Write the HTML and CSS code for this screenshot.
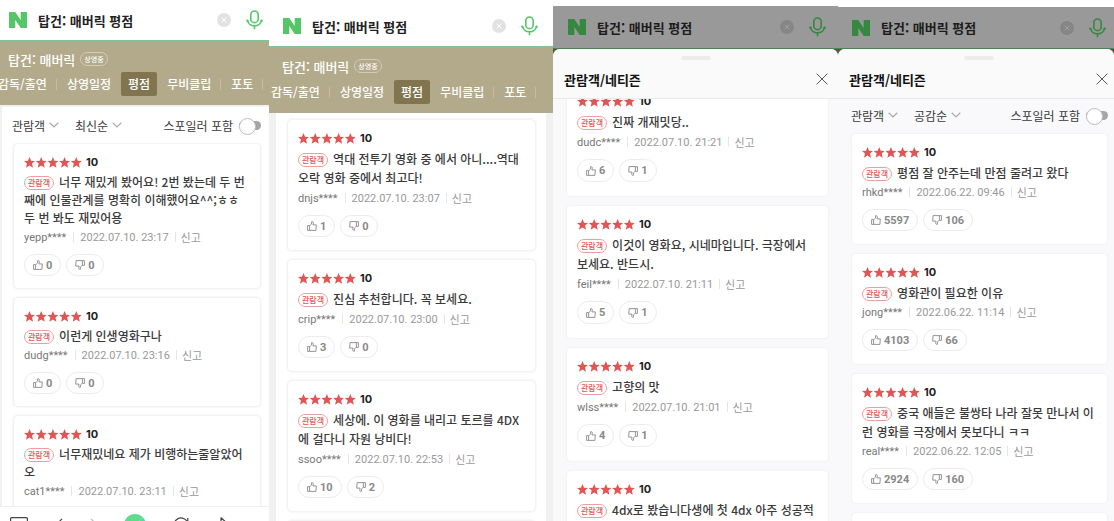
FILE: index.html
```html
<!DOCTYPE html>
<html lang="ko">
<head>
  <meta charset="UTF-8">
  <meta name="viewport" content="width=device-width, initial-scale=1.0">
  <title>탑건: 매버릭 평점</title>
  <link rel="stylesheet" href="styles.css">
</head>
<body>

  <!-- shared icons -->
  <svg class="sprite" aria-hidden="true">
    <symbol id="star" viewBox="0 0 10 10"><path d="M5 0l1.4 3.300 3.600.3-2.700 2.400.9 3.700L5 7.700 1.800 9.700l.9-3.700L0 3.600l3.600-.3z"/></symbol>
    <symbol id="stars" viewBox="0 0 58 11">
      <use href="#star" x="0" width="11" height="11"/>
      <use href="#star" x="11.7" width="11" height="11"/>
      <use href="#star" x="23.4" width="11" height="11"/>
      <use href="#star" x="35.1" width="11" height="11"/>
      <use href="#star" x="46.8" width="11" height="11"/>
    </symbol>
    <symbol id="up" viewBox="0 0 10 10"><path d="M.6 4.6h2v4.8h-2zM2.6 4.8L4.6 3V.7c1.3-.3 1.9.6 1.7 1.6l-.4 1.6h3.4l-.4 5.5H2.6" fill="none" stroke="currentColor" stroke-width=".9" stroke-linejoin="round"/></symbol>
    <symbol id="down" viewBox="0 0 10 10"><path d="M9.400 5.400h-2V.6h2zM7.400 5.200L5.400 7v2.300c-1.300.3-1.900-.6-1.700-1.600l.4-1.600H.7L1.100.6h6.300" fill="none" stroke="currentColor" stroke-width=".9" stroke-linejoin="round"/></symbol>
    <symbol id="logo" viewBox="0 0 18 16"><path d="M0 0h6.300l5.400 8V0H18v16h-6.300L6.300 8v8H0z"/></symbol>
    <symbol id="mic" viewBox="0 0 17 20"><rect x="4.800" y="1" width="7.400" height="11.600" rx="3.700" fill="none" stroke="currentColor" stroke-width="1.600"/><path d="M1.600 10.600c.7 3.200 3.400 5.200 6.900 5.200s6.200-2 6.900-5.200M8.500 15.800v3.400" fill="none" stroke="currentColor" stroke-width="1.600"/><circle cx="1.300" cy="10.600" r="1.200" fill="currentColor"/><circle cx="15.700" cy="10.600" r="1.200" fill="currentColor"/></symbol>
    <symbol id="clear" viewBox="0 0 14 14"><circle cx="7" cy="7" r="7" fill="currentColor"/><path d="M4.700 4.700l4.600 4.600M9.300 4.700L4.700 9.300" stroke="var(--cross, #fff)" stroke-width="1"/></symbol>
    <symbol id="chevron" viewBox="0 0 10 6"><path d="M.7.8L5 5 9.300.8" fill="none" stroke="#aaa" stroke-width="1.200"/></symbol>
    <symbol id="close" viewBox="0 0 12 12"><path d="M.6.6l10.800 10.800M11.400.6L.6 11.400" stroke="#555" stroke-width="1"/></symbol>
  </svg>

  <main class="screens">

    <section class="screen screen-latest">
      <header class="search">
        <svg class="logo"><use href="#logo"/></svg>
        <input type="text" aria-label="검색어" value="탑건: 매버릭 평점">
        <button class="icon-btn" aria-label="지우기"><svg class="clear"><use href="#clear"/></svg></button>
        <button class="icon-btn" aria-label="음성검색"><svg class="mic"><use href="#mic"/></svg></button>
      </header>
      <div class="hero">
        <h1>탑건: 매버릭 <span class="status">상영중</span></h1>
        <nav class="tabs">
          <a href="#">감독/출연</a><a href="#">상영일정</a><a href="#" class="active">평점</a><a href="#">무비클립</a><a href="#">포토</a>
        </nav>
      </div>
      <div class="filters">
        <label class="select"><select aria-label="작성자"><option>관람객</option></select><svg><use href="#chevron"/></svg></label>
        <label class="select"><select aria-label="정렬"><option>최신순</option></select><svg><use href="#chevron"/></svg></label>
        <label class="spoiler">스포일러 포함 <input type="checkbox"></label>
      </div>
      <div class="list">
        <article class="card">
          <div class="score"><svg><use href="#stars"/></svg>10</div>
          <p><span class="badge">관람객</span>너무 재밌게 봤어요! 2번 봤는데 두 번<br>째에 인물관계를 명확히 이해했어요^^;ㅎㅎ<br>두 번 봐도 재밌어용</p>
          <div class="meta"><span>yepp****</span><time>2022.07.10. 23:17</time><a href="#">신고</a></div>
          <div class="votes"><button><svg><use href="#up"/></svg>0</button><button><svg><use href="#down"/></svg>0</button></div>
        </article>
        <article class="card">
          <div class="score"><svg><use href="#stars"/></svg>10</div>
          <p><span class="badge">관람객</span>이런게 인생영화구나</p>
          <div class="meta"><span>dudg****</span><time>2022.07.10. 23:16</time><a href="#">신고</a></div>
          <div class="votes"><button><svg><use href="#up"/></svg>0</button><button><svg><use href="#down"/></svg>0</button></div>
        </article>
        <article class="card">
          <div class="score"><svg><use href="#stars"/></svg>10</div>
          <p><span class="badge">관람객</span>너무재밌네요 제가 비행하는줄알았어<br>오</p>
          <div class="meta"><span>cat1****</span><time>2022.07.10. 23:11</time><a href="#">신고</a></div>
        </article>
      </div>
      <footer class="toolbar">
        <button class="icon-btn" aria-label="홈"><svg width="18" height="16" viewBox="0 0 18 16"><rect x=".6" y=".6" width="16.800" height="14.800" rx="1" fill="none" stroke="#444" stroke-width="1.200"/><path d="M5.500 4v2M12.500 4v2M5 9c2 3 6 3 8 0" fill="none" stroke="#444" stroke-width="1.200"/></svg></button>
        <button class="icon-btn" aria-label="뒤로"><svg width="8" height="14" viewBox="0 0 8 14"><path d="M7 .8L1 7l6 6.200" fill="none" stroke="#444" stroke-width="1.200"/></svg></button>
        <button class="icon-btn" aria-label="앞으로"><svg width="8" height="14" viewBox="0 0 8 14"><path d="M1 .8L7 7l-6 6.200" fill="none" stroke="#bbb" stroke-width="1.200"/></svg></button>
        <button class="icon-btn" aria-label="그린닷"><span class="dot"></span></button>
        <button class="icon-btn" aria-label="새로고침"><svg width="16" height="16" viewBox="0 0 16 16"><path d="M14.400 5A7 7 0 1 0 15 9M14.800 1v4.300h-4.300" fill="none" stroke="#444" stroke-width="1.200"/></svg></button>
        <button class="icon-btn" aria-label="공유"><svg width="14" height="16" viewBox="0 0 14 16"><path d="M5 .8l8 7-8 6.500V10C3 10 1.500 11 .8 13 1 8.500 2.500 5.500 5 5z" fill="none" stroke="#444" stroke-width="1.200" stroke-linejoin="round"/></svg></button>
        <span class="more"></span>
      </footer>
    </section>

    <section class="screen screen-scrolled">
      <header class="search">
        <svg class="logo"><use href="#logo"/></svg>
        <input type="text" aria-label="검색어" value="탑건: 매버릭 평점">
        <button class="icon-btn" aria-label="지우기"><svg class="clear"><use href="#clear"/></svg></button>
        <button class="icon-btn" aria-label="음성검색"><svg class="mic"><use href="#mic"/></svg></button>
      </header>
      <div class="hero">
        <h1>탑건: 매버릭 <span class="status">상영중</span></h1>
        <nav class="tabs">
          <a href="#">감독/출연</a><a href="#">상영일정</a><a href="#" class="active">평점</a><a href="#">무비클립</a><a href="#">포토</a>
        </nav>
      </div>
      <div class="list">
        <article class="card">
          <div class="score"><svg><use href="#stars"/></svg>10</div>
          <p><span class="badge">관람객</span>역대 전투기 영화 중 에서 아니....역대<br>오락 영화 중에서 최고다!</p>
          <div class="meta"><span>dnjs****</span><time>2022.07.10. 23:07</time><a href="#">신고</a></div>
          <div class="votes"><button><svg><use href="#up"/></svg>1</button><button><svg><use href="#down"/></svg>0</button></div>
        </article>
        <article class="card">
          <div class="score"><svg><use href="#stars"/></svg>10</div>
          <p><span class="badge">관람객</span>진심 추천합니다. 꼭 보세요.</p>
          <div class="meta"><span>crip****</span><time>2022.07.10. 23:00</time><a href="#">신고</a></div>
          <div class="votes"><button><svg><use href="#up"/></svg>3</button><button><svg><use href="#down"/></svg>0</button></div>
        </article>
        <article class="card">
          <div class="score"><svg><use href="#stars"/></svg>10</div>
          <p><span class="badge">관람객</span>세상에. 이 영화를 내리고 토르를 4DX<br>에 걸다니 자원 낭비다!</p>
          <div class="meta"><span>ssoo****</span><time>2022.07.10. 22:53</time><a href="#">신고</a></div>
          <div class="votes"><button><svg><use href="#up"/></svg>10</button><button><svg><use href="#down"/></svg>2</button></div>
        </article>
        <article class="card"></article>
      </div>
    </section>

    <section class="screen screen-sheet">
      <header class="search dimmed">
        <svg class="logo"><use href="#logo"/></svg>
        <input type="text" aria-label="검색어" value="탑건: 매버릭 평점">
        <button class="icon-btn" aria-label="지우기"><svg class="clear"><use href="#clear"/></svg></button>
        <button class="icon-btn" aria-label="음성검색"><svg class="mic"><use href="#mic"/></svg></button>
      </header>
      <div class="backdrop">
        <div class="sheet">
          <div class="sheet-head">
            <span class="handle"></span>
            <div class="sheet-title">
              <h2>관람객/네티즌</h2>
              <button class="icon-btn" aria-label="닫기"><svg class="close"><use href="#close"/></svg></button>
            </div>
          </div>
          <div class="sheet-body">
            <div class="list scrolled">
              <article class="card">
                <div class="score"><svg><use href="#stars"/></svg>10</div>
                <p><span class="badge">관람객</span>진짜 개재밋당..</p>
                <div class="meta"><span>dudc****</span><time>2022.07.10. 21:21</time><a href="#">신고</a></div>
                <div class="votes"><button><svg><use href="#up"/></svg>6</button><button><svg><use href="#down"/></svg>1</button></div>
              </article>
              <article class="card">
                <div class="score"><svg><use href="#stars"/></svg>10</div>
                <p><span class="badge">관람객</span>이것이 영화요, 시네마입니다. 극장에서<br>보세요. 반드시.</p>
                <div class="meta"><span>feil****</span><time>2022.07.10. 21:11</time><a href="#">신고</a></div>
                <div class="votes"><button><svg><use href="#up"/></svg>5</button><button><svg><use href="#down"/></svg>1</button></div>
              </article>
              <article class="card">
                <div class="score"><svg><use href="#stars"/></svg>10</div>
                <p><span class="badge">관람객</span>고향의 맛</p>
                <div class="meta"><span>wlss****</span><time>2022.07.10. 21:01</time><a href="#">신고</a></div>
                <div class="votes"><button><svg><use href="#up"/></svg>4</button><button><svg><use href="#down"/></svg>1</button></div>
              </article>
              <article class="card">
                <div class="score"><svg><use href="#stars"/></svg>10</div>
                <p><span class="badge">관람객</span>4dx로 봤습니다생에 첫 4dx 아주 성공적</p>
              </article>
            </div>
          </div>
        </div>
      </div>
    </section>

    <section class="screen screen-sheet screen-best">
      <header class="search dimmed">
        <svg class="logo"><use href="#logo"/></svg>
        <input type="text" aria-label="검색어" value="탑건: 매버릭 평점">
        <button class="icon-btn" aria-label="지우기"><svg class="clear"><use href="#clear"/></svg></button>
        <button class="icon-btn" aria-label="음성검색"><svg class="mic"><use href="#mic"/></svg></button>
      </header>
      <div class="backdrop">
        <div class="sheet">
          <div class="sheet-head">
            <span class="handle"></span>
            <div class="sheet-title">
              <h2>관람객/네티즌</h2>
              <button class="icon-btn" aria-label="닫기"><svg class="close"><use href="#close"/></svg></button>
            </div>
          </div>
          <div class="sheet-body">
            <div class="filters">
              <label class="select"><select aria-label="작성자"><option>관람객</option></select><svg><use href="#chevron"/></svg></label>
              <label class="select"><select aria-label="정렬"><option>공감순</option></select><svg><use href="#chevron"/></svg></label>
              <label class="spoiler">스포일러 포함 <input type="checkbox"></label>
            </div>
            <div class="list">
              <article class="card">
                <div class="score"><svg><use href="#stars"/></svg>10</div>
                <p><span class="badge">관람객</span>평점 잘 안주는데 만점 줄려고 왔다</p>
                <div class="meta"><span>rhkd****</span><time>2022.06.22. 09:46</time><a href="#">신고</a></div>
                <div class="votes"><button><svg><use href="#up"/></svg>5597</button><button><svg><use href="#down"/></svg>106</button></div>
              </article>
              <article class="card">
                <div class="score"><svg><use href="#stars"/></svg>10</div>
                <p><span class="badge">관람객</span>영화관이 필요한 이유</p>
                <div class="meta"><span>jong****</span><time>2022.06.22. 11:14</time><a href="#">신고</a></div>
                <div class="votes"><button><svg><use href="#up"/></svg>4103</button><button><svg><use href="#down"/></svg>66</button></div>
              </article>
              <article class="card">
                <div class="score"><svg><use href="#stars"/></svg>10</div>
                <p><span class="badge">관람객</span>중국 애들은 불쌍타 나라 잘못 만나서 이<br>런 영화를 극장에서 못보다니 ㅋㅋ</p>
                <div class="meta"><span>real****</span><time>2022.06.22. 12:05</time><a href="#">신고</a></div>
                <div class="votes"><button><svg><use href="#up"/></svg>2924</button><button><svg><use href="#down"/></svg>160</button></div>
              </article>
              <article class="card"></article>
            </div>
          </div>
        </div>
      </div>
    </section>

  </main>
</body>
</html>
```
FILE: styles.css
```css
* {
  box-sizing: border-box;
}
body {
  margin: 0;
  background: #fff;
  color: #3a3a3a;
  font-family: Roboto, "Noto Sans CJK KR", sans-serif;
  font-size: 12px;
}
h1, h2, p {
  margin: 0;
}
a {
  color: inherit;
  text-decoration: none;
}
button, input, select {
  font: inherit;
  color: inherit;
}
svg {
  display: block;
  flex: none;
}
.sprite {
  position: absolute;
  width: 0;
  height: 0;
}
.icon-btn {
  display: flex;
  padding: 0;
  border: 0;
  background: none;
}

.screens {
  display: grid;
  grid-template-columns: 269fr 284fr 285fr 276fr;
  height: 100vh;
  overflow: hidden;
}
.screen {
  --line: 19px;
  --meta-gap: 2px;
  --vote: 22px;
  --bottom: 13px;
  display: flex;
  flex-direction: column;
  min-width: 0;
  min-height: 0;
  overflow: hidden;
}

/* search bar */
.search {
  flex: none;
  display: flex;
  align-items: center;
  height: 42px;
  padding: 0 15px 0 14px;
  border-bottom: 2px solid #7cc492;
  background: #fff;
}
.search input {
  flex: 1;
  min-width: 0;
  margin-left: 11px;
  padding: 0;
  border: 0;
  background: none;
  color: #222;
  font-family: "Noto Sans CJK KR", sans-serif;
  font-size: 13px;
  font-weight: 700;
}
.logo {
  width: 18px;
  height: 16px;
  fill: #55c667;
}
.clear {
  width: 14px;
  height: 14px;
  margin-right: 15px;
  color: #e2e2e2;
}
.mic {
  width: 17px;
  height: 20px;
  color: #55c667;
}
.dimmed {
  border-bottom: 1px solid #4b8058;
  background: #999;
}
.dimmed .logo {
  fill: #36873f;
}
.dimmed .mic {
  color: #36873f;
}
.dimmed .clear {
  --cross: #a0a0a0;
  color: #868686;
}
.dimmed input {
  color: #1c1c1c;
}

/* movie title and tabs */
.hero {
  flex: none;
  padding: 8px 0 9px;
  overflow: hidden;
  background: #b3aa8c;
  color: #fff;
}
.hero h1 {
  display: flex;
  align-items: center;
  gap: 5px;
  height: 18px;
  margin-bottom: 4px;
  padding-left: 8px;
  font-family: "Noto Sans CJK KR", sans-serif;
  font-size: 13px;
  font-weight: 500;
}
.status {
  height: 14px;
  padding: 0 3px;
  border: 1px solid #d2ccb9;
  border-radius: 7px;
  font-size: 7px;
  line-height: 12px;
}
.tabs {
  display: flex;
  align-items: center;
  margin-left: -12px;
  white-space: nowrap;
  font-family: "Noto Sans CJK KR", sans-serif;
  font-weight: 500;
  line-height: 24px;
}
.tabs a {
  flex: none;
  padding: 0 10px;
}
.tabs a:first-child,
.tabs a:nth-child(4),
.tabs a:nth-child(5) {
  background: linear-gradient(#c4bda5, #c4bda5) right center / 1px 11px no-repeat;
}
.tabs .active {
  padding: 0 7px;
  border-radius: 2px;
  background: #80754f;
}

/* filters */
.filters {
  flex: none;
  display: flex;
  align-items: center;
  height: 38px;
  padding: 0 8px 0 12px;
  font-family: "Noto Sans CJK KR", sans-serif;
}
.select {
  display: flex;
  align-items: center;
  gap: 3px;
  margin-right: 16px;
}
.select select {
  appearance: none;
  padding: 0;
  border: 0;
  background: none;
}
.select svg {
  width: 10px;
  height: 6px;
}
.spoiler {
  display: flex;
  align-items: center;
  gap: 6px;
  margin-left: auto;
}
.spoiler input {
  appearance: none;
  position: relative;
  width: 22px;
  height: 9px;
  margin: 0;
  border-radius: 5px;
  background: #a5a5a8;
}
.spoiler input::before {
  content: "";
  position: absolute;
  top: -3px;
  left: 0;
  width: 15px;
  height: 15px;
  border: 1px solid #bbb;
  border-radius: 50%;
  background: #fff;
}

/* review cards */
.list {
  display: flex;
  flex-direction: column;
  gap: 8px;
}
.card {
  flex: none;
  min-height: 40px;
  padding: 9px 10px var(--bottom);
  border: 1px solid #f3f3f3;
  border-radius: 5px;
  background: #fff;
  box-shadow: 0 0 1px 1px #f8f8f8;
}
.score {
  display: flex;
  align-items: center;
  gap: 4px;
  height: 18px;
  margin-bottom: 2px;
  color: #222;
  font-family: Inter, sans-serif;
  font-size: 11px;
  font-weight: 700;
}
.score svg {
  width: 58px;
  height: 11px;
  fill: #e15554;
}
.card p {
  font-weight: 500;
  font-family: "Noto Sans CJK KR", sans-serif;
  line-height: var(--line);
  white-space: nowrap;
}
.badge {
  display: inline-block;
  height: 14px;
  margin-right: 5px;
  padding: 0 3px;
  border: 1px solid #eba09f;
  border-radius: 7px;
  color: #e15554;
  font-size: 8px;
  line-height: 12px;
  vertical-align: 1px;
}
.meta {
  display: flex;
  align-items: center;
  height: 18px;
  margin-top: var(--meta-gap);
  color: #999;
  font-size: 11px;
  white-space: nowrap;
}
.meta span {
  color: #777;
}
.meta time,
.meta a {
  margin-left: 7px;
  padding-left: 7px;
  background: linear-gradient(#e6e6e6, #e6e6e6) left center / 1px 10px no-repeat;
}
.meta a {
  margin-left: 6px;
  padding-left: 6px;
}
.votes {
  display: flex;
  gap: 5px;
  margin-top: 8px;
}
.votes button {
  display: flex;
  align-items: center;
  gap: 3px;
  height: var(--vote);
  padding: 0 8px;
  border: 1px solid #ececec;
  border-radius: 12px;
  background: #fff;
  color: #888;
  font-size: 11px;
  font-weight: 700;
}
.votes svg {
  width: 10px;
  height: 10px;
}

/* latest reviews with browser toolbar */
.screen-latest {
  --line: 18px;
  --meta-gap: 1px;
  --bottom: 12px;
}
.screen-latest .search {
  padding: 0 6px 0 9px;
}
.screen-latest .filters {
  padding-left: 10px;
  border-top: 2px solid #f1f1f1;
  border-left: 2px solid #f1f1f1;
}
.screen-latest .list {
  flex: 1;
  min-height: 0;
  padding: 0 8px 0 11px;
  border-left: 2px solid #f1f1f1;
  overflow: hidden;
}
.toolbar {
  flex: none;
  display: flex;
  align-items: center;
  justify-content: space-between;
  height: 36px;
  margin-bottom: -21px;
  padding: 0 10px;
  border-top: 1px solid #eee;
  background: #fff;
}
.dot {
  width: 22px;
  height: 22px;
  border: 7px solid #5fdc8b;
  border-right-color: #5cd6a8;
  border-radius: 50%;
  background: #fff;
}
.more {
  width: 2px;
}

/* list scrolled under the title */
.screen-scrolled .search {
  height: 48px;
  padding-top: 6px;
}
.screen-scrolled .hero {
  padding-top: 9px;
}
.screen-scrolled .hero h1 {
  margin-bottom: 5px;
  padding-left: 13px;
}
.screen-scrolled .tabs {
  margin-left: -8px;
}
.screen-scrolled .list {
  flex: 1;
  min-height: 0;
  padding: 6px 10px 0 11px;
  border: solid #f1f1f1;
  border-width: 0 7px;
  overflow: hidden;
}

/* bottom sheet */
.screen-sheet {
  --vote: 23px;
  --bottom: 14px;
  padding-top: 6px;
}
.screen-sheet .search {
  height: 43px;
  padding: 0 12px 0 15px;
}
.backdrop {
  flex: 1;
  min-height: 0;
  background: #5b573f;
}
.sheet {
  display: flex;
  flex-direction: column;
  height: 100%;
  overflow: hidden;
  border-radius: 7px 7px 0 0;
  background: #f9f9fb;
}
.sheet-head {
  flex: none;
  height: 50px;
  padding: 7px 10px 0 11px;
  border-bottom: 1px solid #eaeaec;
  background: #fafafa;
}
.handle {
  display: block;
  width: 30px;
  height: 4px;
  margin: 0 auto;
  border-radius: 2px;
  background: #ececec;
}
.sheet-title {
  display: flex;
  align-items: center;
  justify-content: space-between;
  height: 38px;
}
.sheet-title h2 {
  color: #111;
  font-family: "Noto Sans CJK KR", sans-serif;
  font-size: 13px;
  font-weight: 700;
}
.close {
  width: 12px;
  height: 12px;
}
.sheet-body {
  flex: 1;
  min-height: 0;
  overflow: hidden;
}
.sheet .list {
  padding: 0 9px 0 13px;
}
.sheet .scrolled {
  margin-top: -17px;
}
.screen-best {
  --meta-gap: 1px;
  --vote: 22px;
  --bottom: 13px;
  padding-top: 7px;
}
.screen-best .search {
  height: 42px;
  padding: 0 8px 0 14px;
}
.screen-best .sheet-head {
  padding-right: 6px;
}
.screen-best .filters {
  height: 32px;
  margin-bottom: 2px;
  padding: 0 6px 0 13px;
}
.screen-best .list {
  padding-right: 6px;
}
```
